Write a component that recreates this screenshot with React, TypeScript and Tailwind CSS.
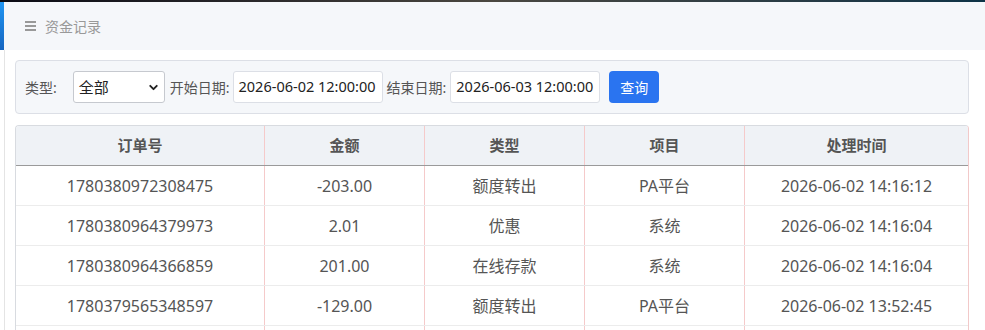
import { ChevronDown } from 'lucide-react';

const rows = [
  { id: '1780380972308475', amount: '-203.00', type: '额度转出', item: 'PA平台', time: '2026-06-02 14:16:12' },
  { id: '1780380964379973', amount: '2.01', type: '优惠', item: '系统', time: '2026-06-02 14:16:04' },
  { id: '1780380964366859', amount: '201.00', type: '在线存款', item: '系统', time: '2026-06-02 14:16:04' },
  { id: '1780379565348597', amount: '-129.00', type: '额度转出', item: 'PA平台', time: '2026-06-02 13:52:45' },
];

const cols = 'grid grid-cols-[249px_160px_160px_160px_1fr]';

function DateInput({ value }: { value: string }) {
  return (
    <div className="w-[150px] h-8 bg-white border border-[#dcdfe6] rounded-[3px] px-[5px] flex items-center whitespace-nowrap overflow-hidden text-[14.5px] text-[#222]">
      {value}
    </div>
  );
}

export default function App() {
  return (
    <div className="w-[985px] h-[330px] overflow-hidden bg-white font-['Noto_Sans','Noto_Sans_CJK_SC',sans-serif]">
      <div className="h-[2px] bg-gradient-to-r from-[#0b0b14] via-[#4a4740] to-[#0d3346]" />

      <div className="h-12 flex bg-[#f5f7fa]">
        <div className="w-1 bg-gradient-to-b from-[#2196f3] to-[#1565c0]" />
        <div className="flex items-center pl-[21px] gap-[9px] text-[14px] text-[#999]">
          <svg width="11" height="10" viewBox="0 0 11 10" className="fill-[#999]">
            <rect x="0" y="0" width="11" height="2" />
            <rect x="0" y="4" width="11" height="2" />
            <rect x="0" y="8" width="11" height="2" />
          </svg>
          <span>资金记录</span>
        </div>
      </div>

      <div className="ml-1 border-l border-[#e4e4e4] pl-[10px] pr-4 pt-[10px] h-full">
        <div className="h-[54px] border border-[#dcdfe6] rounded-[4px] bg-[#f5f7fa] flex items-center px-[9px] text-[14px] text-[#555] whitespace-nowrap">
          <span>类型:</span>
          <div className="ml-[16px] w-[92px] h-8 bg-white border border-[#c6c9cf] rounded-[3px] pl-[5px] pr-[4px] flex items-center justify-between text-[15px] text-[#222]">
            <span>全部</span>
            <ChevronDown size={13} strokeWidth={3.5} className="text-[#222]" />
          </div>
          <span className="ml-[5px] mr-[3px]">开始日期:</span>
          <DateInput value="2026-06-02 12:00:00" />
          <span className="ml-[4px] mr-[4px]">结束日期:</span>
          <DateInput value="2026-06-03 12:00:00" />
          <button className="ml-[9px] w-[50px] h-8 rounded-[4px] bg-[#2a74f0] text-white text-[14px]">
            查询
          </button>
        </div>

        <div className="mt-[11px] border-t border-l border-[#d8dbe0] border-r border-r-[#f2c9c9] rounded-t-[4px] overflow-hidden">
          <div className={`${cols} h-10 bg-[#eff2f6] border-b border-[#9a9a9a] text-[15px] font-bold text-[#555]`}>
            {['订单号', '金额', '类型', '项目', '处理时间'].map((h, i) => (
              <div
                key={h}
                className={`flex items-center justify-center ${i < 4 ? 'border-r border-[#f5caca]' : ''}`}
              >
                {h}
              </div>
            ))}
          </div>
          {rows.map((r) => (
            <div key={r.id} className={`${cols} h-10 border-b border-[#ececec] text-[16px] text-[#555]`}>
              {[r.id, r.amount, r.type, r.item, r.time].map((v, i) => (
                <div
                  key={i}
                  className={`flex items-center justify-center ${i < 4 ? 'border-r border-[#f5caca]' : ''}`}
                >
                  {v}
                </div>
              ))}
            </div>
          ))}
          <div className={`${cols} h-10`}>
            {[0, 1, 2, 3, 4].map((i) => (
              <div key={i} className={i < 4 ? 'border-r border-[#f5caca]' : ''} />
            ))}
          </div>
        </div>
      </div>
    </div>
  );
}
